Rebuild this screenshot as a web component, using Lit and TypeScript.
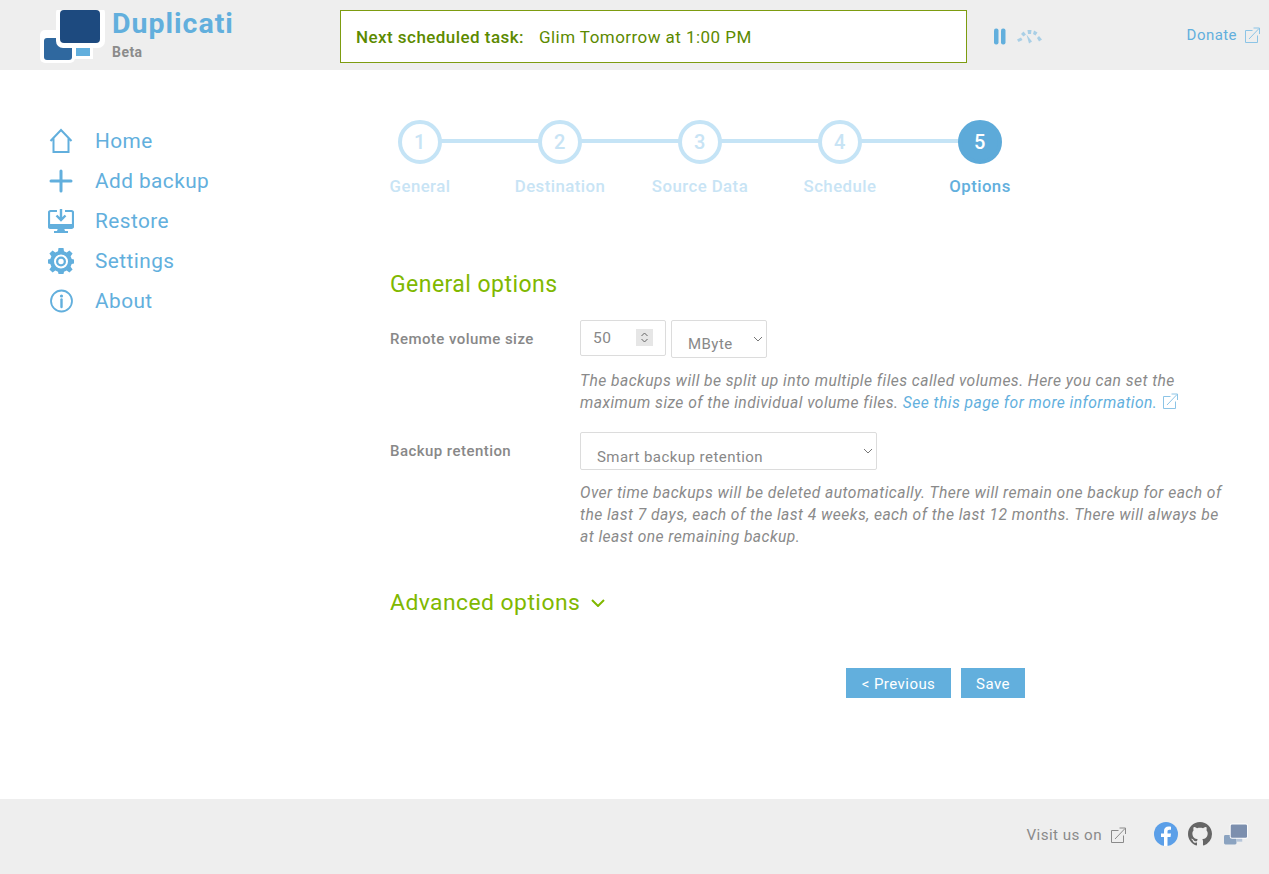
import { LitElement, html, css, svg } from "lit";
import { customElement } from "lit/decorators.js";

const ext = (c: string) => html`<svg class="ext" viewBox="0 0 16 16" fill="none" stroke=${c} stroke-width="1"><path d="M8.5 3.5H1.5V15.5H13.5V8.5"/><path d="M5 12L15 1.5M9.5 1H15.5V7" /></svg>`;

const icons: Record<string, unknown> = {
  home: svg`<path d="M2.500 13L13 2L23.500 13M5.500 10.500V24H20.500V10.500" fill="none" stroke="#62afdd" stroke-width="2"/>`,
  plus: svg`<path d="M13 3V23M3 13H23" fill="none" stroke="#62afdd" stroke-width="3" stroke-linecap="round"/>`,
  restore: svg`<path d="M9 3H2.5A1.5 1.5 0 0 0 1 4.500V18.500A1.500 1.500 0 0 0 2.500 20H23.500A1.500 1.500 0 0 0 25 18.500V4.500A1.500 1.500 0 0 0 23.500 3H17" fill="none" stroke="#62afdd" stroke-width="2.200"/><path d="M1 16H25V20H1ZM10 20H16L17 23H20V25H6V23H9Z" fill="#62afdd"/><path d="M13 1V11M8.500 7.500L13 12L17.500 7.500" fill="none" stroke="#62afdd" stroke-width="2.400"/>`,
  gear: svg`<g fill="#62afdd"><path fill-rule="evenodd" d="M10.500 0H15.500L16 3.300L18.700 4.400L21.400 2.400L24.600 5.600L22.600 8.300L23.700 11L26 11.500V15.500L23.700 16L22.600 18.700L24.600 21.400L21.400 24.600L18.700 22.600L16 23.700L15.500 26H10.500L10 23.700L7.300 22.600L4.600 24.600L1.400 21.400L3.400 18.700L2.300 16L0 15.500V11.500L2.300 11L3.400 8.300L1.400 5.600L4.600 2.400L7.300 4.400L10 3.300ZM13 6.500A7 7 0 1 0 13 20.500A7 7 0 1 0 13 6.500Z"/><path fill-rule="evenodd" d="M13 8.500A5 5 0 1 1 13 18.500A5 5 0 1 1 13 8.500ZM13 10.800A2.700 2.700 0 1 0 13 16.200A2.700 2.700 0 1 0 13 10.800Z"/></g>`,
  info: svg`<circle cx="13.500" cy="13" r="10.500" fill="none" stroke="#62afdd" stroke-width="1.800"/><circle cx="13.500" cy="8" r="1.600" fill="#62afdd"/><path d="M13.500 11.500V19" stroke="#62afdd" stroke-width="2.400" stroke-linecap="round"/>`,
};

const nav = [
  ["home", "Home"],
  ["plus", "Add backup"],
  ["restore", "Restore"],
  ["gear", "Settings"],
  ["info", "About"],
];
const steps = ["General", "Destination", "Source Data", "Schedule", "Options"];
const chevron = html`<svg class="chev" viewBox="0 0 10 6" fill="none" stroke="#777" stroke-width="1"><path d="M1 1L5 5L9 1"/></svg>`;

@customElement("app-root")
export class AppRoot extends LitElement {
  static styles = css`
    :host { display: flex; flex-direction: column; min-height: 874px; background: #fff; font-family: Roboto, "Noto Sans", sans-serif; color: #888; font-size: 15px; letter-spacing: 0.45px; }
    * { box-sizing: border-box; }
    a { color: #62afdd; text-decoration: none; }
    .ext { width: 16px; height: 16px; flex: none; }

    header { height: 70px; background: #eee; display: flex; align-items: flex-start; padding: 10px 9px 0 40px; }
    .logo { width: 65px; height: 53px; flex: none; display: block; }
    .brand { width: 235px; padding-left: 7px; flex: none; }
    .brand b { display: block; font-size: 28.500px; line-height: 28px; color: #62afdd; font-weight: 700; letter-spacing: 1px; }
    .brand span { display: block; font-size: 14px; line-height: 18px; margin-top: 5px; font-weight: 700; color: #8b8b8b; }
    .next { width: 627px; height: 53px; flex: none; background: #fff; border: 1px solid #7d9c10; color: #5c8a00; display: flex; align-items: center; padding-left: 15px; font-size: 17px; }
    .next b { font-weight: 500; margin-right: 15px; }
    .state { display: flex; align-items: center; gap: 10px; margin-left: 26px; height: 53px; flex: none; }
    .state svg { display: block; }
    .donate { margin-left: auto; height: 50px; display: flex; align-items: center; gap: 7px; font-size: 15px; color: #62afdd; }

    .body { flex: 1; display: flex; }
    nav { width: 390px; flex: none; padding: 51px 0 0 48px; display: flex; flex-direction: column; }
    nav a { height: 40px; display: flex; align-items: center; gap: 21px; font-size: 20.800px; }
    nav svg { width: 26px; height: 26px; flex: none; }

    main { flex: 1; min-width: 0; padding-top: 50px; }
    .steps { display: flex; margin-left: -40px; }
    .step { width: 140px; display: flex; flex-direction: column; align-items: center; position: relative; color: #c8e4f5; font-size: 16.800px; font-weight: 500; }
    .step .line { position: absolute; left: 70px; width: 140px; top: 19px; height: 4px; background: #c5e4f6; }
    .step:last-child .line { display: none; }
    .dot { width: 44px; height: 44px; border-radius: 50%; border: 4px solid #c5e4f6; background: #fff; display: flex; align-items: center; justify-content: center; font-size: 20px; font-weight: 500; position: relative; }
    .label { margin-top: 10px; line-height: 24px; white-space: nowrap; }
    .step.on { color: #62afdd; }
    .step.on .dot { background: #5daad9; border-color: #5daad9; color: #fff; }

    h2 { margin: 0; font-weight: 400; color: #80b800; }
    h2.gen { font-size: 23px; line-height: 30px; margin-top: 72px; }
    .row { display: flex; }
    .row > label { width: 190px; flex: none; font-weight: 500; line-height: 24px; padding-top: 7px; color: #888; }
    .r1 { margin-top: 20px; }
    .r2 { margin-top: 18px; }
    .controls { display: flex; gap: 5px; }
    .box { position: relative; display: block; }
    input, select { font: inherit; color: #888; background: #fff; border: 1px solid #dcdcdc; border-radius: 2px; outline: none; appearance: none; display: block; margin: 0; letter-spacing: 0.45px; }
    .num input { width: 86px; height: 36px; padding: 0 0 0 12px; font-size: 15.500px; }
    .spin { position: absolute; right: 13px; top: 9px; width: 17px; height: 17px; background: #e6e6e6; display: block; }
    .spin svg { display: block; width: 17px; height: 17px; }
    .unit select { width: 96px; height: 38px; padding: 10px 0 0 16px; }
    .ret select { width: 297px; height: 38px; padding: 12px 0 0 16px; }
    .chev { position: absolute; right: 4px; top: 16px; width: 10px; height: 6px; pointer-events: none; }
    .help { margin: 0 0 0 190px; font-style: italic; line-height: 22px; color: #8a8a8a; padding-right: 39px; font-size: 15.640px; }
    .h1 { margin-top: 12px; }
    .h2 { margin-top: 12px; }
    .help a { color: #62afdd; }
    .help .ext { display: inline-block; vertical-align: -1px; margin-left: 0; }
    h2.adv { font-size: 22.900px; line-height: 32px; margin-top: 39px; display: flex; align-items: center; gap: 11px; }
    h2.adv svg { width: 14px; height: 8px; }
    .btns { display: flex; gap: 10px; margin: 49px 0 0 456px; }
    button { font: inherit; letter-spacing: 0.45px; color: #fff; background: #62afdd; border: 0; height: 30px; padding: 1px 0 0; }
    button.prev { width: 105px; }
    button.save { width: 64px; }

    footer { height: 75px; background: #eee; display: flex; align-items: center; padding: 0 21px 5px 0; justify-content: flex-end; color: #8a8a8a; font-size: 15.200px; }
    .visit { display: flex; align-items: center; gap: 8px; margin-right: 28px; padding-top: 1px; }
    .social { display: flex; align-items: center; gap: 10px; }
    .social svg { display: block; width: 24px; height: 24px; }
    .social svg.mini { width: 24px; height: 22px; margin-left: 2px; }
  `;

  render() {
    return html`
      <header>
        <svg class="logo" viewBox="0 0 65 53">
          <rect x="0" y="20" width="35" height="33" rx="5" fill="#fff"/>
          <rect x="4" y="28" width="28" height="22" rx="3" fill="#2f689f"/>
          <rect x="32" y="34" width="21" height="15" fill="#fff"/>
          <rect x="36" y="36" width="14" height="10" fill="#62afdd"/>
          <rect x="16" y="-4" width="49" height="42" rx="7" fill="#fff"/>
          <rect x="20" y="0" width="40" height="33" rx="4" fill="#1d4a7f"/>
        </svg>
        <div class="brand"><b>Duplicati</b><span>Beta</span></div>
        <div class="next"><b>Next scheduled task:</b> Glim Tomorrow at 1:00 PM</div>
        <div class="state">
          <svg width="14" height="17" viewBox="0 0 14 17"><rect x="1" y="0.500" width="4.500" height="16" rx="2" fill="#62afdd"/><rect x="8" y="0.500" width="4.500" height="16" rx="2" fill="#62afdd"/></svg>
          <svg width="26" height="17" viewBox="0 0 26 17" fill="#a9cfe6"><path d="M0 11.500L4 9.500L5.500 12L1.500 14ZM4 6L6.500 3.500L9 6.500L6.500 8.500ZM10.500 2H14.500L14 6H11ZM17 2.500L20.500 4.500L18.500 7.500L16 6ZM22 8L25 11.500L22 13.500L20 10Z"/><path d="M9.500 6.500L15 13.500L12 15.500Z"/></svg>
        </div>
        <a class="donate" href="#">Donate ${ext("#8cc4e6")}</a>
      </header>
      <div class="body">
        <nav>
          ${nav.map(([i, t]) => html`<a href="#"><svg viewBox="0 0 26 26">${icons[i]}</svg>${t}</a>`)}
        </nav>
        <main>
          <div class="steps">
            ${steps.map((s, i) => html`<div class="step ${i === 4 ? "on" : ""}"><span class="line"></span><span class="dot">${i + 1}</span><span class="label">${s}</span></div>`)}
          </div>
          <h2 class="gen">General options</h2>
          <div class="row r1">
            <label>Remote volume size</label>
            <div class="controls">
              <span class="box num"><input value="50"/><span class="spin"><svg viewBox="0 0 17 17" fill="none" stroke="#666" stroke-width="1"><path d="M5.500 7L8.500 4L11.500 7M5.500 10L8.500 13L11.500 10"/></svg></span></span>
              <span class="box unit"><select><option>MByte</option></select>${chevron}</span>
            </div>
          </div>
          <p class="help h1">The backups will be split up into multiple files called volumes. Here you can set the maximum size of the individual volume files. <a href="#">See this page for more information.</a> ${ext("#8cc4e6")}</p>
          <div class="row r2">
            <label>Backup retention</label>
            <span class="box ret"><select><option>Smart backup retention</option></select>${chevron}</span>
          </div>
          <p class="help h2">Over time backups will be deleted automatically. There will remain one backup for each of the last 7 days, each of the last 4 weeks, each of the last 12 months. There will always be at least one remaining backup.</p>
          <h2 class="adv">Advanced options <svg viewBox="0 0 14 8" fill="none" stroke="#80b800" stroke-width="2"><path d="M1 1L7 7L13 1"/></svg></h2>
          <div class="btns"><button class="prev">&lt; Previous</button><button class="save">Save</button></div>
        </main>
      </div>
      <footer>
        <div class="visit">Visit us on ${ext("#8a8a8a")}</div>
        <div class="social">
          <svg viewBox="0 0 24 24"><circle cx="12" cy="12" r="12" fill="#5b9fe8"/><path d="M13.500 24V15H16.500L17 11.500H13.500V9.500C13.500 8.500 14 7.800 15.300 7.800H17V4.800C16.400 4.700 15.500 4.600 14.600 4.600C11.800 4.600 10 6.200 10 9.100V11.500H7V15H10V24Z" fill="#fff"/></svg>
          <svg viewBox="0 0 16 16"><path fill="#666" d="M8 0C3.580 0 0 3.580 0 8c0 3.540 2.290 6.530 5.470 7.590.4.070.55-.17.550-.38 0-.19-.01-.82-.01-1.490-2.010.37-2.530-.49-2.690-.94-.09-.23-.48-.94-.82-1.130-.28-.15-.68-.52-.01-.53.63-.01 1.080.58 1.230.82.720 1.210 1.870.87 2.330.66.070-.52.280-.87.510-1.070-1.780-.2-3.640-.89-3.640-3.950 0-.87.310-1.590.820-2.150-.08-.2-.36-1.020.08-2.120 0 0 .67-.21 2.200.82.640-.18 1.320-.27 2-.27s1.360.09 2 .27c1.530-1.040 2.200-.82 2.200-.82.440 1.100.16 1.920.08 2.120.51.560.82 1.270.82 2.150 0 3.070-1.870 3.750-3.650 3.950.29.250.54.730.54 1.480 0 1.070-.01 1.930-.01 2.200 0 .21.150.46.550.38A8.010 8.010 0 0 0 16 8c0-4.420-3.580-8-8-8z"/></svg>
          <svg class="mini" viewBox="0 0 25 22">
            <rect x="0" y="12" width="13" height="10" rx="1.500" fill="#8ba3c0"/>
            <rect x="13" y="15" width="6" height="4" fill="#b6c6da"/>
            <rect x="6" y="0" width="19" height="16" rx="2.500" fill="#fff"/>
            <rect x="7" y="1" width="17" height="14" rx="1.500" fill="#7c8fae"/>
          </svg>
        </div>
      </footer>
    `;
  }
}
